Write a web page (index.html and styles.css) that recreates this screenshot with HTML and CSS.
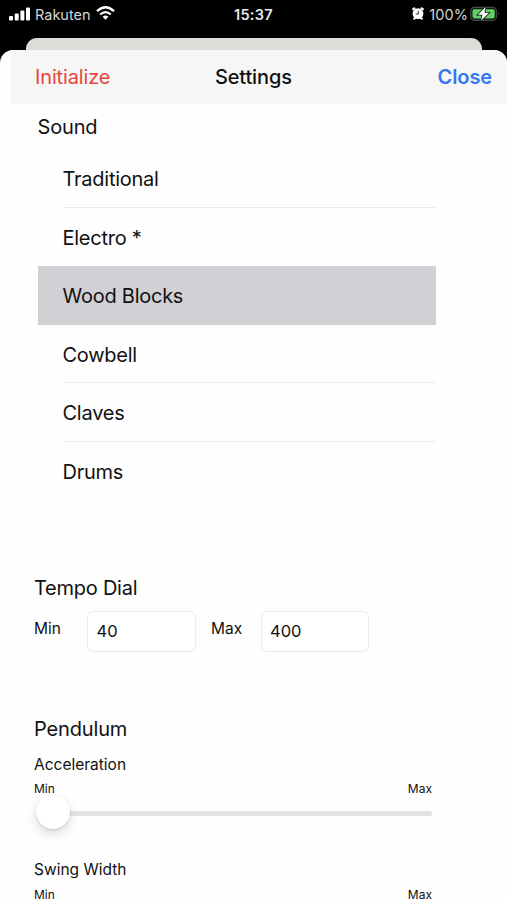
FILE: index.html
```html
<!DOCTYPE html>
<html lang="en">
<head>
<meta charset="utf-8">
<title>Settings</title>
<link rel="stylesheet" href="styles.css">
</head>
<body>
<div class="status">
  <div class="status-left">
    <svg class="signal" width="22" height="14" viewBox="0 0 22 14" fill="#fff"><rect x="0" y="9" width="4" height="4.5" rx="1"/><rect x="5.7" y="6.5" width="4" height="7" rx="1"/><rect x="11.4" y="3.5" width="4" height="10" rx="1"/><rect x="17" y="0.5" width="4" height="13" rx="1"/></svg>
    <span class="carrier">Rakuten</span>
    <svg class="wifi" width="19" height="14" viewBox="0 0 19 14"><g fill="none" stroke="#fff" stroke-width="2.3"><path d="M1 5.2Q9.500-2.600 18 5.200"/><path d="M4.200 8.500Q9.500 3.800 14.800 8.500"/></g><path d="M6.600 10.700Q9.500 8.200 12.400 10.700L9.500 13.700Z" fill="#fff"/></svg>
  </div>
  <span class="time">15:37</span>
  <div class="status-right">
    <svg class="alarm" width="12" height="13" viewBox="0 0 12 13"><g stroke="#fff" stroke-width="2.200" stroke-linecap="round"><path d="M1.200 2.200L2.400 1.400M10.800 2.200L9.600 1.400M2.300 11.600L3.300 11M9.700 11.600L8.700 11"/></g><circle cx="6" cy="6.600" r="5.400" fill="#fff"/><path d="M6.300 3.800V7H3.700" fill="none" stroke="#333" stroke-width="1"/></svg>
    <span class="percent">100%</span>
    <svg class="battery" width="30" height="16" viewBox="0 0 30 16"><rect x="0.700" y="1.300" width="25.800" height="13" rx="3.800" fill="#101510" stroke="#454b46" stroke-width="1.200"/><rect x="2.500" y="3.200" width="22.200" height="9.200" rx="1.800" fill="#5fd166"/><path d="M28 5.600Q29.600 7.800 28 10Z" fill="#454b46"/><path d="M15.600 1L8 8.700H12.400L11 14.800L19 6.700H14.400Z" fill="#fff" stroke="#101510" stroke-width="1.600" paint-order="stroke"/></svg>
  </div>
</div>
<div class="back-card"></div>
<main class="sheet">
  <header class="nav">
    <span class="init">Initialize</span>
    <span class="title">Settings</span>
    <span class="close">Close</span>
  </header>
  <h2 class="heading sound">Sound</h2>
  <ul class="list">
    <li class="row"><span class="label">Traditional</span></li>
    <li class="row plain"><span class="label">Electro *</span></li>
    <li class="row selected"><span class="label">Wood Blocks</span></li>
    <li class="row"><span class="label">Cowbell</span></li>
    <li class="row"><span class="label">Claves</span></li>
    <li class="row plain"><span class="label">Drums</span></li>
  </ul>
  <h2 class="heading tempo">Tempo Dial</h2>
  <div class="fields">
    <span class="field-label min">Min</span><div class="field">40</div>
    <span class="field-label max">Max</span><div class="field">400</div>
  </div>
  <h2 class="heading pendulum">Pendulum</h2>
  <section class="slider">
    <h3 class="sub">Acceleration</h3>
    <div class="range"><span>Min</span><span>Max</span></div>
    <div class="track"><div class="thumb"></div></div>
  </section>
  <section class="slider">
    <h3 class="sub">Swing Width</h3>
    <div class="range"><span>Min</span><span>Max</span></div>
    <div class="track"><div class="thumb middle"></div></div>
  </section>
</main>
</body>
</html>
```
FILE: styles.css
```css
* { box-sizing: border-box; margin: 0; padding: 0; }
html { height: 900px; overflow: hidden; }
body {
  width: 507px;
  height: 900px;
  overflow: hidden;
  background: #000;
  color: #111;
  font-family: Inter, "Liberation Sans", sans-serif;
  white-space: nowrap;
}
svg { display: block; flex: none; }
.status {
  height: 38px;
  padding: 0 7px 10px 9px;
  display: grid;
  grid-template-columns: 1fr auto 1fr;
  align-items: center;
  color: #fff;
}
.status-left, .status-right { display: flex; align-items: center; }
.status-right { justify-content: flex-end; }
.signal { margin-top: -1px; }
.carrier { margin-left: 4px; width: 56px; font-size: 14.5px; color: #d4d4d4; }
.wifi { margin: -2px 0 0 5px; }
.time { font-size: 14.5px; font-weight: 600; letter-spacing: .3px; color: #e8e8e8; margin-right: 2px; }
.alarm { margin: -2px 5px 0 0; }
.percent { font-size: 14.5px; letter-spacing: .1px; color: #d4d4d4; margin-right: 2px; }
.battery { margin-top: -1px; }
.back-card {
  height: 12px;
  margin: 0 25px 0 26px;
  border-radius: 11px 11px 0 0;
  background: #dcddd8;
}
.sheet {
  height: 850px;
  overflow: hidden;
  border-radius: 13px 13px 0 0;
  background: #fefefe;
}
.nav {
  height: 54px;
  margin-left: 10px;
  padding: 0 15px 0 25px;
  display: grid;
  grid-template-columns: 180px 1fr auto;
  align-items: center;
  background: #f6f6f6;
  font-size: 20px;
}
.init { color: #e9453a; letter-spacing: -.15px; }
.title { font-weight: 500; letter-spacing: -.15px; }
.close { color: #3478f0; font-weight: 600; letter-spacing: -.1px; }
.heading { font-size: 20px; font-weight: 400; line-height: 30px; padding-left: 34px; letter-spacing: -.15px; }
.sound { padding-left: 37.5px; height: 45px; padding-top: 8px; }
.list { list-style: none; width: 398px; margin-left: 38px; height: 351.6px; }
.row { height: 58.6px; padding-left: 24.5px; display: flex; }
.label {
  flex: 1;
  line-height: 60px;
  font-size: 20px;
  letter-spacing: -.25px;
  border-bottom: 1.5px solid #ebebec;
}
.plain .label, .selected .label { border-bottom-color: transparent; }
.selected { background: #d1d0d5; }
.tempo { margin-top: 72px; letter-spacing: -.25px; }
.fields { height: 41px; margin: 8px 0 0 34px; display: flex; }
.field-label { font-size: 15.5px; line-height: 35px; }
.min { width: 53px; }
.max { width: 49.5px; margin-left: 15.5px; }
.field {
  width: 108.5px;
  height: 41px;
  padding-left: 8.5px;
  border: 1px solid #ebebeb;
  border-radius: 6px;
  background: #fff;
  font-size: 16.5px;
  line-height: 39px;
}
.pendulum { margin-top: 62px; }
.slider { height: 105px; width: 398px; margin-left: 34px; }
.sub { height: 39px; font-size: 15.5px; font-weight: 400; line-height: 41px; }
.range { height: 11px; display: flex; justify-content: space-between; font-size: 12px; line-height: 11px; }
.slider + .slider .range { margin-top: 1px; }
.track { height: 5px; margin: 17px 0 0 4px; border-radius: 3px; background: #e3e3e4; display: flex; align-items: center; }
.thumb {
  flex: none;
  width: 34px;
  height: 34px;
  margin: -2px 0 0 -2px;
  border-radius: 50%;
  background: #fff;
  box-shadow: 0 5px 11px rgba(0, 0, 0, .14), 0 1px 2px rgba(0, 0, 0, .12);
}
.middle { margin-left: 182px; }
```
